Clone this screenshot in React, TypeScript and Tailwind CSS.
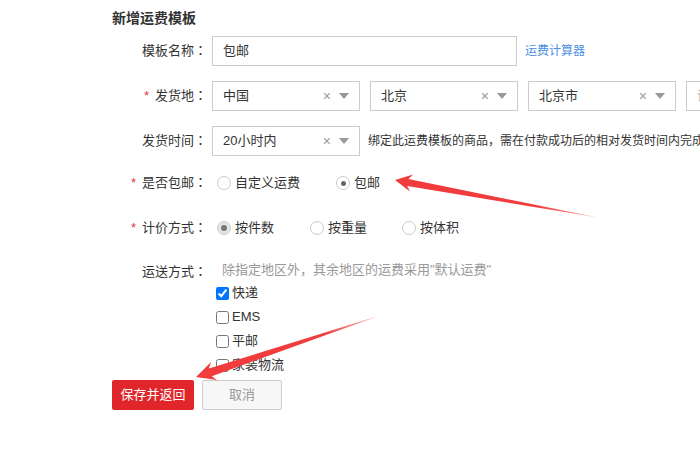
import React from "react";

function Colon() {
  return <span className="font-[Noto_Sans_CJK_TC,sans-serif] leading-none">：</span>;
}

function Label({ text, required }: { text: string; required?: boolean }) {
  return (
    <div className="h-[30px] w-[100px] shrink-0 overflow-hidden pr-[5px] text-right text-[13px] leading-[30px] text-[#333]">
      {required ? <span className="mr-[6px] text-[#e4393c]">*</span> : null}
      {text}
      <Colon />
    </div>
  );
}

function Select({ value, placeholder }: { value?: string; placeholder?: string }) {
  return (
    <div className="flex h-[30px] w-[148px] shrink-0 items-center border border-[#ccc] bg-white pl-[10px] pr-[10px]">
      <span className={`flex-1 whitespace-nowrap text-[13px] ${value ? "text-[#333]" : "text-[#aaa]"}`}>
        {value ?? placeholder}
      </span>
      {value ? (
        <>
          <span className="text-[14px] leading-none text-[#999]">×</span>
          <svg width="10" height="6" viewBox="0 0 10 6" className="ml-[8px]">
            <path d="M0 0 H10 L5 6 Z" fill="#999" />
          </svg>
        </>
      ) : null}
    </div>
  );
}

function Radio({ label, checked, muted }: { label: string; checked?: boolean; muted?: boolean }) {
  return (
    <div className="flex items-center">
      <span
        className={`flex h-[14px] w-[14px] items-center justify-center rounded-full border border-[#ccc] ${
          muted ? "bg-[#e4e4e4]" : "bg-white"
        }`}
      >
        {checked ? (
          <span className={`rounded-full ${muted ? "h-[6px] w-[6px] bg-[#777]" : "h-[5px] w-[5px] bg-[#666]"}`} />
        ) : null}
      </span>
      <span className="ml-[4px] text-[13px] text-[#333]">{label}</span>
    </div>
  );
}

function Check({ label, checked }: { label: string; checked?: boolean }) {
  return (
    <label className="flex h-[24px] items-center">
      <input type="checkbox" defaultChecked={checked} className="m-0 ml-[4px] h-[13px] w-[13px]" />
      <span className="ml-[3px] text-[13px] text-[#333]">{label}</span>
    </label>
  );
}

export default function App() {
  return (
    <div className="relative h-[467px] w-[700px] overflow-hidden bg-white font-[Liberation_Sans,Noto_Sans_CJK_SC,sans-serif]">
      <div className="pl-[112px] pt-[9px]">
        <h1 className="text-[14px] font-bold leading-[18px] text-[#333]">新增运费模板</h1>

        <div className="mt-[9px] flex items-center">
          <Label text="模板名称" />
          <div className="flex h-[30px] w-[305px] items-center border border-[#ccc] pl-[10px] text-[13px] text-[#333]">
            包邮
          </div>
          <a className="ml-[8px] text-[12px] text-[#4a8fe0]" href="#">
            运费计算器
          </a>
        </div>

        <div className="mt-[15px] flex items-center">
          <Label text="发货地" required />
          <div className="flex gap-[10px]">
            <Select value="中国" />
            <Select value="北京" />
            <Select value="北京市" />
            <Select placeholder="请选择" />
          </div>
        </div>

        <div className="mt-[15px] flex items-center">
          <Label text="发货时间" />
          <Select value="20小时内" />
          <span className="ml-[8px] whitespace-nowrap text-[12px] text-[#333]">
            绑定此运费模板的商品，需在付款成功后的相对发货时间内完成发货
          </span>
        </div>

        <div className="mt-[12px] flex items-center">
          <Label text="是否包邮" required />
          <div className="flex items-center pl-[5px]">
            <Radio label="自定义运费" />
            <div className="ml-[36px]">
              <Radio label="包邮" checked />
            </div>
          </div>
        </div>

        <div className="mt-[15px] flex items-center">
          <Label text="计价方式" required />
          <div className="flex items-center pl-[5px]">
            <Radio label="按件数" checked muted />
            <div className="ml-[36px]">
              <Radio label="按重量" />
            </div>
            <div className="ml-[35px]">
              <Radio label="按体积" />
            </div>
          </div>
        </div>

        <div className="mt-[15px] flex items-start">
          <div className="h-[28px] w-[100px] shrink-0 overflow-hidden pr-[5px] text-right text-[13px] leading-[28px] text-[#333]">
            运送方式
            <Colon />
          </div>
          <div>
            <div className="pl-[10px] text-[13px] leading-[23px] text-[#999]">除指定地区外，其余地区的运费采用"默认运费"</div>
            <Check label="快递" checked />
            <Check label="EMS" />
            <Check label="平邮" />
            <Check label="家装物流" />
          </div>
        </div>

        <div className="mt-[3px] flex gap-[8px]">
          <button className="h-[30px] w-[82px] rounded-[2px] bg-[#e0262a] text-[13px] text-white">保存并返回</button>
          <button className="h-[30px] w-[80px] rounded-[2px] border border-[#ccc] bg-[#f7f7f7] text-[13px] text-[#999]">
            取消
          </button>
        </div>
      </div>

      <svg className="pointer-events-none absolute left-0 top-0" width="700" height="467" viewBox="0 0 700 467">
        <defs>
          <linearGradient id="a1" x1="598" y1="217" x2="395" y2="180" gradientUnits="userSpaceOnUse">
            <stop offset="0" stopColor="#f04040" stopOpacity="0.4" />
            <stop offset="0.3" stopColor="#f03c3c" />
            <stop offset="1" stopColor="#f03c3c" />
          </linearGradient>
          <linearGradient id="a2" x1="380" y1="316" x2="196" y2="377" gradientUnits="userSpaceOnUse">
            <stop offset="0" stopColor="#f04040" stopOpacity="0.4" />
            <stop offset="0.3" stopColor="#f03c3c" />
            <stop offset="1" stopColor="#f03c3c" />
          </linearGradient>
        </defs>
        <polygon points="395,180 413,174.5 408.4,179 598,217.5 407.2,186 410,191.5" fill="url(#a1)" />
        <polygon points="196,377 211,362 208.9,368.5 380,315.5 211.8,376.2 217,380" fill="url(#a2)" />
      </svg>
    </div>
  );
}
